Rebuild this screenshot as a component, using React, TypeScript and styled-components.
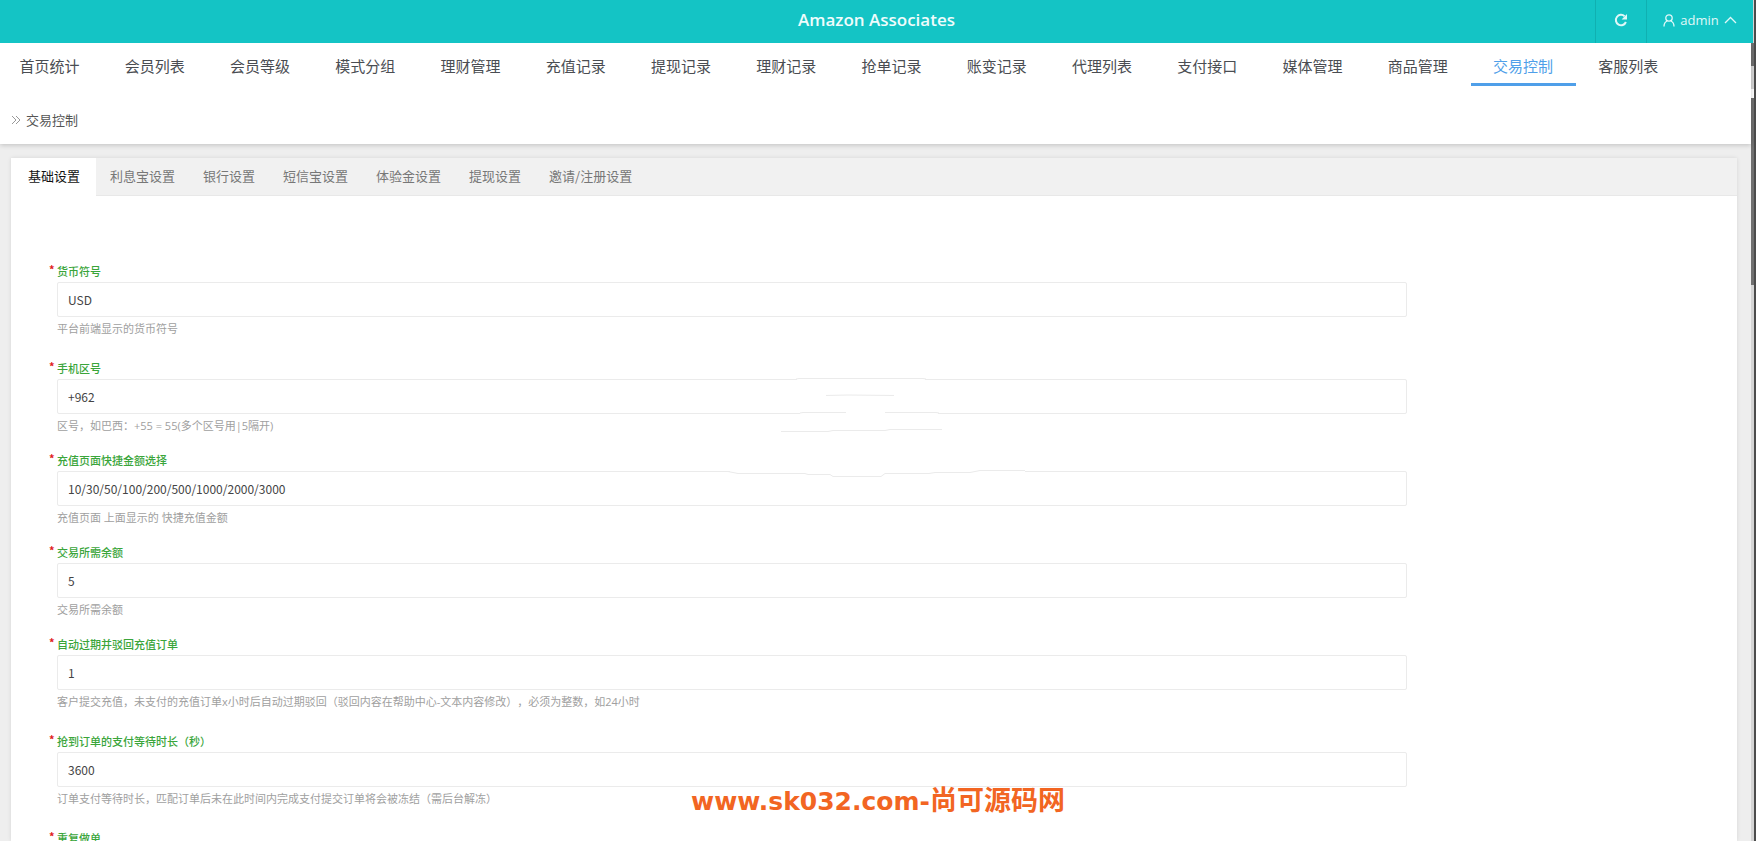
import React, { useId } from 'react';
import styled, { createGlobalStyle } from 'styled-components';

const GlobalStyle = createGlobalStyle`
  * { box-sizing: border-box; }
  body {
    margin: 0;
    overflow: hidden;
    background: #eeeeee;
    font-family: 'Noto Sans CJK SC', sans-serif;
    color: #333;
    text-spacing-trim: space-all;
  }
  button, input { font-family: inherit; }
`;

const Shell = styled.div`
  position: relative;
  display: flex;
  flex-direction: column;
  height: 100vh;
  overflow: hidden;
`;

const Header = styled.header`
  position: relative;
  z-index: 1;
  flex: none;
  display: grid;
  grid-template-columns: 1fr auto 1fr;
  height: 43px;
  margin-right: 3px;
  background: #14c4c5;
  color: #fff;
`;

const Title = styled.h1`
  grid-column: 2;
  margin: 0;
  color: #effcfc;
  font: 600 17px/40px 'Open Sans', sans-serif;
`;

const HeaderTools = styled.div`
  display: flex;
  justify-content: flex-end;
`;

const ToolButton = styled.button<{ $width: number }>`
  display: flex;
  align-items: center;
  justify-content: center;
  gap: 5px;
  width: ${(p) => p.$width}px;
  padding: 0 0 3px;
  border: 0;
  border-left: 1px solid #10b0b1;
  background: none;
  color: #e0f8f8;
  font: 13px/20px 'Open Sans', sans-serif;
`;

const TopPanel = styled.div`
  position: relative;
  flex: none;
  height: 101px;
  margin-right: 5px;
  background: #fff;
  box-shadow: 0 1px 5px rgba(0, 0, 0, 0.2);
`;

const Nav = styled.nav`
  display: grid;
  grid-template-columns: repeat(16, 1fr);
  margin: 0 70px 0 -3px;
`;

const NavLink = styled.a<{ $active?: boolean }>`
  height: 43px;
  border-bottom: 3px solid ${(p) => (p.$active ? '#4f9fe9' : 'transparent')};
  color: ${(p) => (p.$active ? '#4f9fe9' : '#4a4d52')};
  font-size: 15px;
  line-height: 45px;
  text-align: center;
  text-decoration: none;
  white-space: nowrap;
`;

const Breadcrumb = styled.div`
  display: flex;
  align-items: center;
  gap: 5px;
  padding: 24px 0 0 11px;
  color: #555;
  font-size: 13px;
  line-height: 20px;
`;

const Card = styled.main`
  flex: 1;
  min-height: 0;
  margin: 14px 19px 0 11px;
  background: #fff;
  box-shadow: 0 0 4px rgba(0, 0, 0, 0.1);
`;

const Tabs = styled.div`
  display: flex;
  height: 38px;
  border-bottom: 1px solid #e8e8e8;
  background: #f1f1f1;
`;

const Tab = styled.button<{ $active?: boolean }>`
  height: 38px;
  padding: ${(p) => (p.$active ? '0 16px 2px 17px' : '0 14px 2px')};
  border: 0;
  background: ${(p) => (p.$active ? '#fff' : 'transparent')};
  color: ${(p) => (p.$active ? '#111' : '#777')};
  font-size: 13px;
  line-height: 36px;
  white-space: nowrap;
`;

const Form = styled.form`
  position: relative;
  display: flex;
  flex-direction: column;
  width: 81%;
  padding: 67px 2px 0 46px;
`;

const Row = styled.div<{ $spaced?: boolean }>`
  flex: none;
  display: flex;
  flex-direction: column;
  height: ${(p) => (p.$spaced ? 97 : 92)}px;
`;

const Label = styled.label`
  position: relative;
  padding-bottom: 3px;
  color: #3aa53a;
  font-size: 11px;
  font-weight: 500;
  line-height: 16px;
`;

const Required = styled.span`
  position: absolute;
  left: -8px;
  top: -2px;
  color: #e02020;
  font-weight: bold;
`;

const Field = styled.input`
  width: 100%;
  height: 35px;
  padding: 0 10px 1px;
  border: 1px solid #ebebeb;
  border-radius: 2px;
  background: #fff;
  color: #444;
  font-size: 12px;
`;

const Hint = styled.p`
  margin: 4px 0 0;
  color: #a0a0a0;
  font-family: 'Open Sans', 'Noto Sans CJK SC', sans-serif;
  font-size: 11px;
  line-height: 16px;
  white-space: nowrap;
`;

const FaintLines = styled.svg`
  position: absolute;
  left: 659px;
  top: 164px;
  pointer-events: none;
`;

const Watermark = styled.div`
  position: absolute;
  left: 0;
  right: 0;
  bottom: 21px;
  color: #f26522;
  font: bold 25px/36px 'DejaVu Sans', sans-serif;
  text-align: center;
  white-space: nowrap;
`;

const WatermarkName = styled.span`
  font-family: 'Noto Sans CJK SC', sans-serif;
  font-size: 27px;
`;

const ScrollTrack = styled.div`
  position: absolute;
  top: 0;
  right: 0;
  bottom: 0;
  width: 5px;
  border-right: 2px solid #4c4c4c;
  background: #d4d4d4;
`;

const ScrollThumb = styled.div<{ $top: number; $height: number }>`
  position: absolute;
  top: ${(p) => p.$top}px;
  right: 0;
  width: 3px;
  height: ${(p) => p.$height}px;
  background: #707070;
`;

const ScrollGap = styled(ScrollThumb)`
  background: #fff;
`;

const navItems = [
  '首页统计', '会员列表', '会员等级', '模式分组', '理财管理', '充值记录', '提现记录', '理财记录',
  '抢单记录', '账变记录', '代理列表', '支付接口', '媒体管理', '商品管理', '交易控制', '客服列表',
];

const tabs = ['基础设置', '利息宝设置', '银行设置', '短信宝设置', '体验金设置', '提现设置', '邀请/注册设置'];

type Setting = { label: string; value: string; hint: string; spaced?: boolean };

const settings: Setting[] = [
  { label: '货币符号', value: 'USD', hint: '平台前端显示的货币符号', spaced: true },
  { label: '手机区号', value: '+962', hint: '区号，如巴西：+55 = 55(多个区号用|5隔开)' },
  { label: '充值页面快捷金额选择', value: '10/30/50/100/200/500/1000/2000/3000', hint: '充值页面 上面显示的 快捷充值金额' },
  { label: '交易所需余额', value: '5', hint: '交易所需余额' },
  {
    label: '自动过期并驳回充值订单',
    value: '1',
    hint: '客户提交充值，未支付的充值订单x小时后自动过期驳回（驳回内容在帮助中心-文本内容修改），必须为整数，如24小时',
    spaced: true,
  },
  {
    label: '抢到订单的支付等待时长（秒）',
    value: '3600',
    hint: '订单支付等待时长，匹配订单后未在此时间内完成支付提交订单将会被冻结（需后台解冻）',
    spaced: true,
  },
  { label: '重复做单', value: '', hint: '' },
];

function SettingRow({ label, value, hint, spaced }: Setting) {
  const id = useId();
  return (
    <Row $spaced={spaced}>
      <Label htmlFor={id}>
        <Required>*</Required>
        {label}
      </Label>
      <Field id={id} defaultValue={value} />
      <Hint>{hint}</Hint>
    </Row>
  );
}

export default function App() {
  return (
    <>
      <GlobalStyle />
      <Shell>
        <ScrollTrack>
          <ScrollThumb $top={43} $height={23} />
          <ScrollGap $top={89} $height={9} />
          <ScrollThumb $top={98} $height={187} />
        </ScrollTrack>

        <Header>
          <Title>Amazon Associates</Title>
          <HeaderTools>
            <ToolButton $width={51} aria-label="刷新">
              <svg width="14" height="14" viewBox="0 0 14 14" fill="none" stroke="currentColor" strokeWidth="2">
                <path d="M11.9 9A5.2 5.2 0 1 1 10.6 3.2" />
                <path d="M13 1v5.4H7.6z" fill="currentColor" stroke="none" />
              </svg>
            </ToolButton>
            <ToolButton $width={107}>
              <svg width="12" height="13" viewBox="0 0 12 13" fill="none" stroke="currentColor" strokeWidth="1.3">
                <circle cx="6" cy="4" r="3.2" />
                <path d="M1 12.5C1 9.5 2.4 7.8 4.2 7M11 12.5C11 9.5 9.6 7.8 7.8 7" />
              </svg>
              admin
              <svg width="13" height="8" viewBox="0 0 13 8" fill="none" stroke="currentColor" strokeWidth="1.3">
                <path d="M1 7l5.5-5.5L12 7" />
              </svg>
            </ToolButton>
          </HeaderTools>
        </Header>

        <TopPanel>
          <Nav>
            {navItems.map((item) => (
              <NavLink key={item} href="#" $active={item === '交易控制'}>
                {item}
              </NavLink>
            ))}
          </Nav>
          <Breadcrumb>
            <svg width="10" height="10" viewBox="0 0 10 10" fill="none" stroke="#999" strokeWidth="1">
              <path d="M1 1l4 4-4 4M5 1l4 4-4 4" />
            </svg>
            交易控制
          </Breadcrumb>
        </TopPanel>

        <Card>
          <Tabs role="tablist">
            {tabs.map((tab, i) => (
              <Tab key={tab} role="tab" aria-selected={i === 0} $active={i === 0}>
                {tab}
              </Tab>
            ))}
          </Tabs>
          <Form>
            {settings.map((s) => (
              <SettingRow key={s.label} {...s} />
            ))}
            <FaintLines width="500" height="130" viewBox="0 0 500 130" fill="none" stroke="#ebebeb">
              <path d="M127 19.5H255M130 53.5H268" stroke="#fff" strokeWidth="3" />
              <path d="M60 111.5H355" stroke="#fff" strokeWidth="3" />
              <path d="M126 19L129 18.5H253L256 19M130 53L133 52.5H176M215 52.5H266L269 53" />
              <path d="M156 35.5L178 35L224 35.5M111 71.5H158L163 70.5H215L220 69.5H272" />
              <path d="M58 111.5L68 113.5H135L138 114.5H160L163 116.5H211L215 113.5H259L265 112.5H300L310 110.5H355" />
            </FaintLines>
          </Form>
        </Card>

        <Watermark>
          www.sk032.com-<WatermarkName>尚可源码网</WatermarkName>
        </Watermark>
      </Shell>
    </>
  );
}
